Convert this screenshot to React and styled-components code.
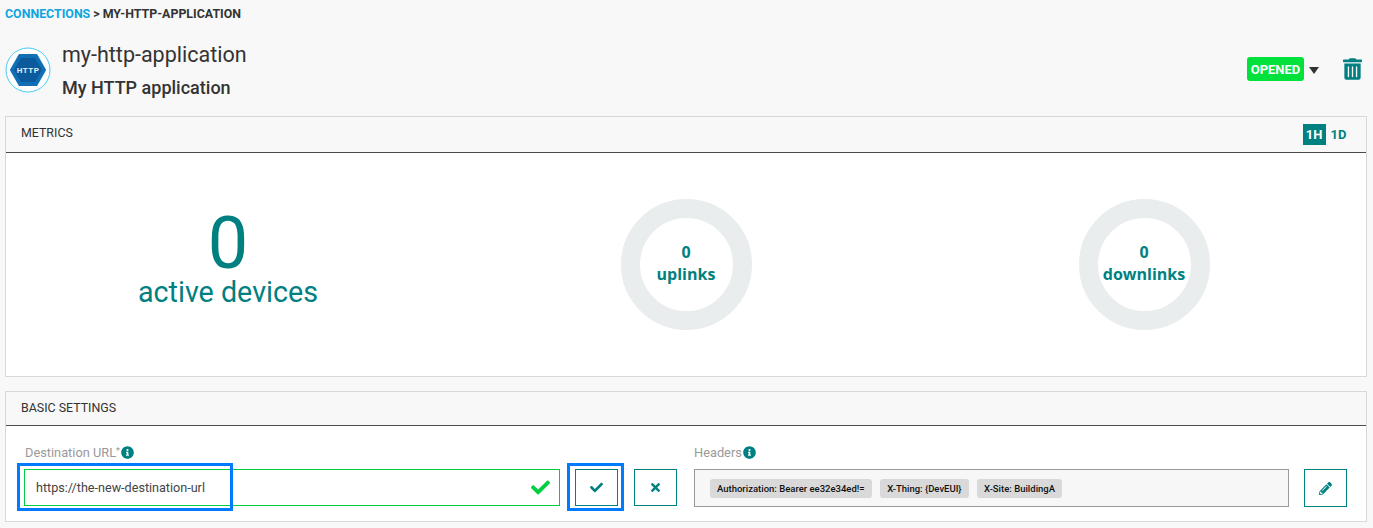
import React from 'react';
import styled, { createGlobalStyle } from 'styled-components';
import { FaCheck, FaTimes, FaPencilAlt, FaTrashAlt, FaInfoCircle } from 'react-icons/fa';

const GlobalStyle = createGlobalStyle`
  html, body {
    margin: 0;
    padding: 0;
    background: #f8f8f8;
    font-family: Roboto, "Liberation Sans", sans-serif;
    color: #333;
  }
`;

const TEAL = '#008080';

const Page = styled.div`
  width: 1373px;
  height: 528px;
  box-sizing: border-box;
  padding: 0 6px 0 5px;
  overflow: hidden;
`;

const Breadcrumb = styled.div`
  height: 27px;
  display: flex;
  align-items: center;
  gap: 3px;
  font-size: 12.4px;
  font-weight: 700;
  color: #333;
`;

const CrumbLink = styled.a`
  color: #0ea5e0;
`;

const Header = styled.div`
  height: 89px;
  display: flex;
  align-items: flex-start;
  justify-content: space-between;
`;

const Identity = styled.div`
  display: flex;
  gap: 11px;
  padding-top: 13px;
`;

const Logo = styled.svg`
  width: 46px;
  height: 46px;
  margin-top: 7px;
`;

const Names = styled.div`
  display: flex;
  flex-direction: column;
`;

const Title = styled.div`
  font-size: 21.5px;
  line-height: 30px;
  color: #333;
`;

const Subtitle = styled.div`
  font-size: 18px;
  font-weight: 500;
  line-height: 24px;
  margin-top: 6px;
  color: #333;
`;

const Status = styled.div`
  display: flex;
  align-items: center;
  padding: 30px 5px 0 0;
`;

const Badge = styled.div`
  width: 57px;
  height: 24px;
  border-radius: 3px;
  background: #00e13c;
  color: #fff;
  font-size: 13px;
  font-weight: 700;
  display: flex;
  align-items: center;
  justify-content: center;
`;

const Caret = styled.div`
  width: 0;
  height: 0;
  margin: 2px 0 0 5px;
  border-left: 5.5px solid transparent;
  border-right: 5.5px solid transparent;
  border-top: 7px solid #333;
`;

const Trash = styled(FaTrashAlt)`
  width: 19px;
  height: 22px;
  margin-left: 24px;
  color: ${TEAL};
`;

const Panel = styled.section`
  border: 1px solid #d8d8d8;
  margin-bottom: 14px;
`;

const PanelHead = styled.div`
  height: ${(p) => p.$height}px;
  box-sizing: border-box;
  border-bottom: 1px solid #4a4a4a;
  padding: 0 16px ${(p) => p.$lift}px 15px;
  display: flex;
  align-items: center;
  justify-content: space-between;
  font-size: 12.4px;
  color: #333;
`;

const Ranges = styled.div`
  display: flex;
  align-items: center;
  gap: 1.5px;
  margin-top: ${(p) => p.$drop}px;
`;

const Range = styled.div`
  width: 23px;
  height: 21px;
  display: flex;
  align-items: center;
  justify-content: center;
  font-size: 13px;
  font-weight: 700;
  color: ${(p) => (p.$active ? '#fff' : TEAL)};
  background: ${(p) => (p.$active ? TEAL : 'transparent')};
`;

const MetricsBody = styled.div`
  height: 223px;
  background: #fff;
  display: grid;
  grid-template-columns: 444px 472px 444px;
  align-items: center;
  justify-items: center;
`;

const Active = styled.div`
  display: flex;
  flex-direction: column;
  align-items: center;
  color: ${TEAL};
  margin-bottom: 8px;
`;

const ActiveCount = styled.div`
  font-size: 72px;
  line-height: 62px;
`;

const ActiveLabel = styled.div`
  font-size: 28.7px;
  line-height: 34px;
`;

const Donut = styled.div`
  position: relative;
  width: 131px;
  height: 131px;
`;

const DonutText = styled.div`
  position: absolute;
  inset: 0 0 4px 0;
  display: flex;
  flex-direction: column;
  align-items: center;
  justify-content: center;
  font-family: "Open Sans", sans-serif;
  font-weight: 700;
  font-size: 16px;
  line-height: 22px;
  color: ${TEAL};
`;

const SettingsBody = styled.div`
  height: 95px;
  box-sizing: border-box;
  background: #fff;
  padding: 18px 20px 0 18px;
  display: flex;
`;

const Column = styled.div`
  display: flex;
  flex-direction: column;
  width: ${(p) => p.$width}px;
  margin-left: ${(p) => p.$offset || 0}px;
`;

const Label = styled.div`
  height: 17px;
  padding-left: ${(p) => p.$indent || 0}px;
  display: flex;
  align-items: center;
  gap: 1px;
  font-size: 12.8px;
  color: #999;
`;

const Star = styled.sup`
  font-size: 9px;
  line-height: 0;
  margin: -3px 0 0 -1px;
`;

const Info = styled(FaInfoCircle)`
  width: 13px;
  height: 13px;
  color: ${TEAL};
`;

const Row = styled.div`
  display: flex;
  margin-top: 8px;
`;

const UrlField = styled.div`
  position: relative;
  width: 536px;
  height: 37px;
  box-sizing: border-box;
  border: 1px solid #00d040;
  background: #fff;
  display: flex;
  align-items: center;
  justify-content: space-between;
  padding: 0 9px 0 11px;
  font-size: 12.6px;
  color: #444;
`;

const GoodCheck = styled(FaCheck)`
  width: 19px;
  height: 19px;
  color: #00d040;
`;

const Highlight = styled.div`
  position: absolute;
  box-sizing: border-box;
  border: 3px solid #007bff;
  top: ${(p) => p.$top}px;
  left: ${(p) => p.$left}px;
  width: ${(p) => p.$w}px;
  height: ${(p) => p.$h}px;
  pointer-events: none;
`;

const Square = styled.button`
  position: relative;
  width: 43px;
  height: ${(p) => p.$h || 37}px;
  box-sizing: border-box;
  margin-left: ${(p) => p.$offset}px;
  padding: 0;
  border: 1px solid ${TEAL};
  background: #fff;
  color: ${TEAL};
  display: flex;
  align-items: center;
  justify-content: center;
  font-size: 13px;
`;

const HeadersBox = styled.div`
  width: 595px;
  height: 38px;
  box-sizing: border-box;
  border: 1px solid #9a9a9a;
  background: #f7f7f7;
  display: flex;
  align-items: center;
  gap: 8.5px;
  padding-left: 15px;
`;

const Tag = styled.span`
  height: 19px;
  padding: 0 7px;
  border-radius: 3px;
  background: #d9d9d9;
  color: #111;
  font-size: 9.5px;
  font-weight: 500;
  display: flex;
  align-items: center;
`;

const Counter = ({ value, label }) => (
  <Donut>
    <svg width="131" height="131" viewBox="0 0 131 131">
      <circle cx="65.5" cy="65.5" r="56" fill="none" stroke="#e9eded" strokeWidth="19" />
    </svg>
    <DonutText>
      <span>{value}</span>
      <span>{label}</span>
    </DonutText>
  </Donut>
);

export default function App() {
  return (
    <Page>
      <GlobalStyle />
      <Breadcrumb>
        <CrumbLink>CONNECTIONS</CrumbLink>
        <span>&gt;</span>
        <span>MY-HTTP-APPLICATION</span>
      </Breadcrumb>

      <Header>
        <Identity>
          <Logo viewBox="0 0 46 46">
            <circle cx="23" cy="23" r="22" fill="#fff" stroke="#45cdf7" strokeWidth="1" />
            <polygon points="6,23 14.5,8 31.5,8 40,23 31.5,38 14.5,38" fill="#1170b5" stroke="#1170b5" strokeWidth="2" strokeLinejoin="round" />
            <polygon points="9,23 16,11 30,11 37,23 30,35 16,35" fill="#0a5a9c" />
            <text x="23" y="26" textAnchor="middle" fontFamily="Roboto, sans-serif" fontSize="8" fontWeight="700" fill="#e6f0f8" letterSpacing="0.5">HTTP</text>
          </Logo>
          <Names>
            <Title>my-http-application</Title>
            <Subtitle>My HTTP application</Subtitle>
          </Names>
        </Identity>
        <Status>
          <Badge>OPENED</Badge>
          <Caret />
          <Trash />
        </Status>
      </Header>

      <Panel>
        <PanelHead $height={36} $lift={4}>
          <span>METRICS</span>
          <Ranges $drop={3}>
            <Range $active>1H</Range>
            <Range>1D</Range>
          </Ranges>
        </PanelHead>
        <MetricsBody>
          <Active>
            <ActiveCount>0</ActiveCount>
            <ActiveLabel>active devices</ActiveLabel>
          </Active>
          <Counter value="0" label="uplinks" />
          <Counter value="0" label="downlinks" />
        </MetricsBody>
      </Panel>

      <Panel>
        <PanelHead $height={34} $lift={2}>
          <span>BASIC SETTINGS</span>
        </PanelHead>
        <SettingsBody>
          <Column $width={653}>
            <Label $indent={1}>
              Destination URL<Star>*</Star> <Info />
            </Label>
            <Row>
              <UrlField>
                https://the-new-destination-url
                <GoodCheck />
                <Highlight $top={-7} $left={-8} $w={216} $h={48} />
              </UrlField>
              <Square $offset={15}>
                <FaCheck />
                <Highlight $top={-7} $left={-9} $w={57} $h={48} />
              </Square>
              <Square $offset={16}>
                <FaTimes />
              </Square>
            </Row>
          </Column>
          <Column $width={653} $offset={17}>
            <Label>
              Headers <Info />
            </Label>
            <Row>
              <HeadersBox>
                <Tag>Authorization: Bearer ee32e34ed!=</Tag>
                <Tag>X-Thing: {'{DevEUI}'}</Tag>
                <Tag>X-Site: BuildingA</Tag>
              </HeadersBox>
              <Square $offset={15} $h={38}>
                <FaPencilAlt />
              </Square>
            </Row>
          </Column>
        </SettingsBody>
      </Panel>
    </Page>
  );
}
